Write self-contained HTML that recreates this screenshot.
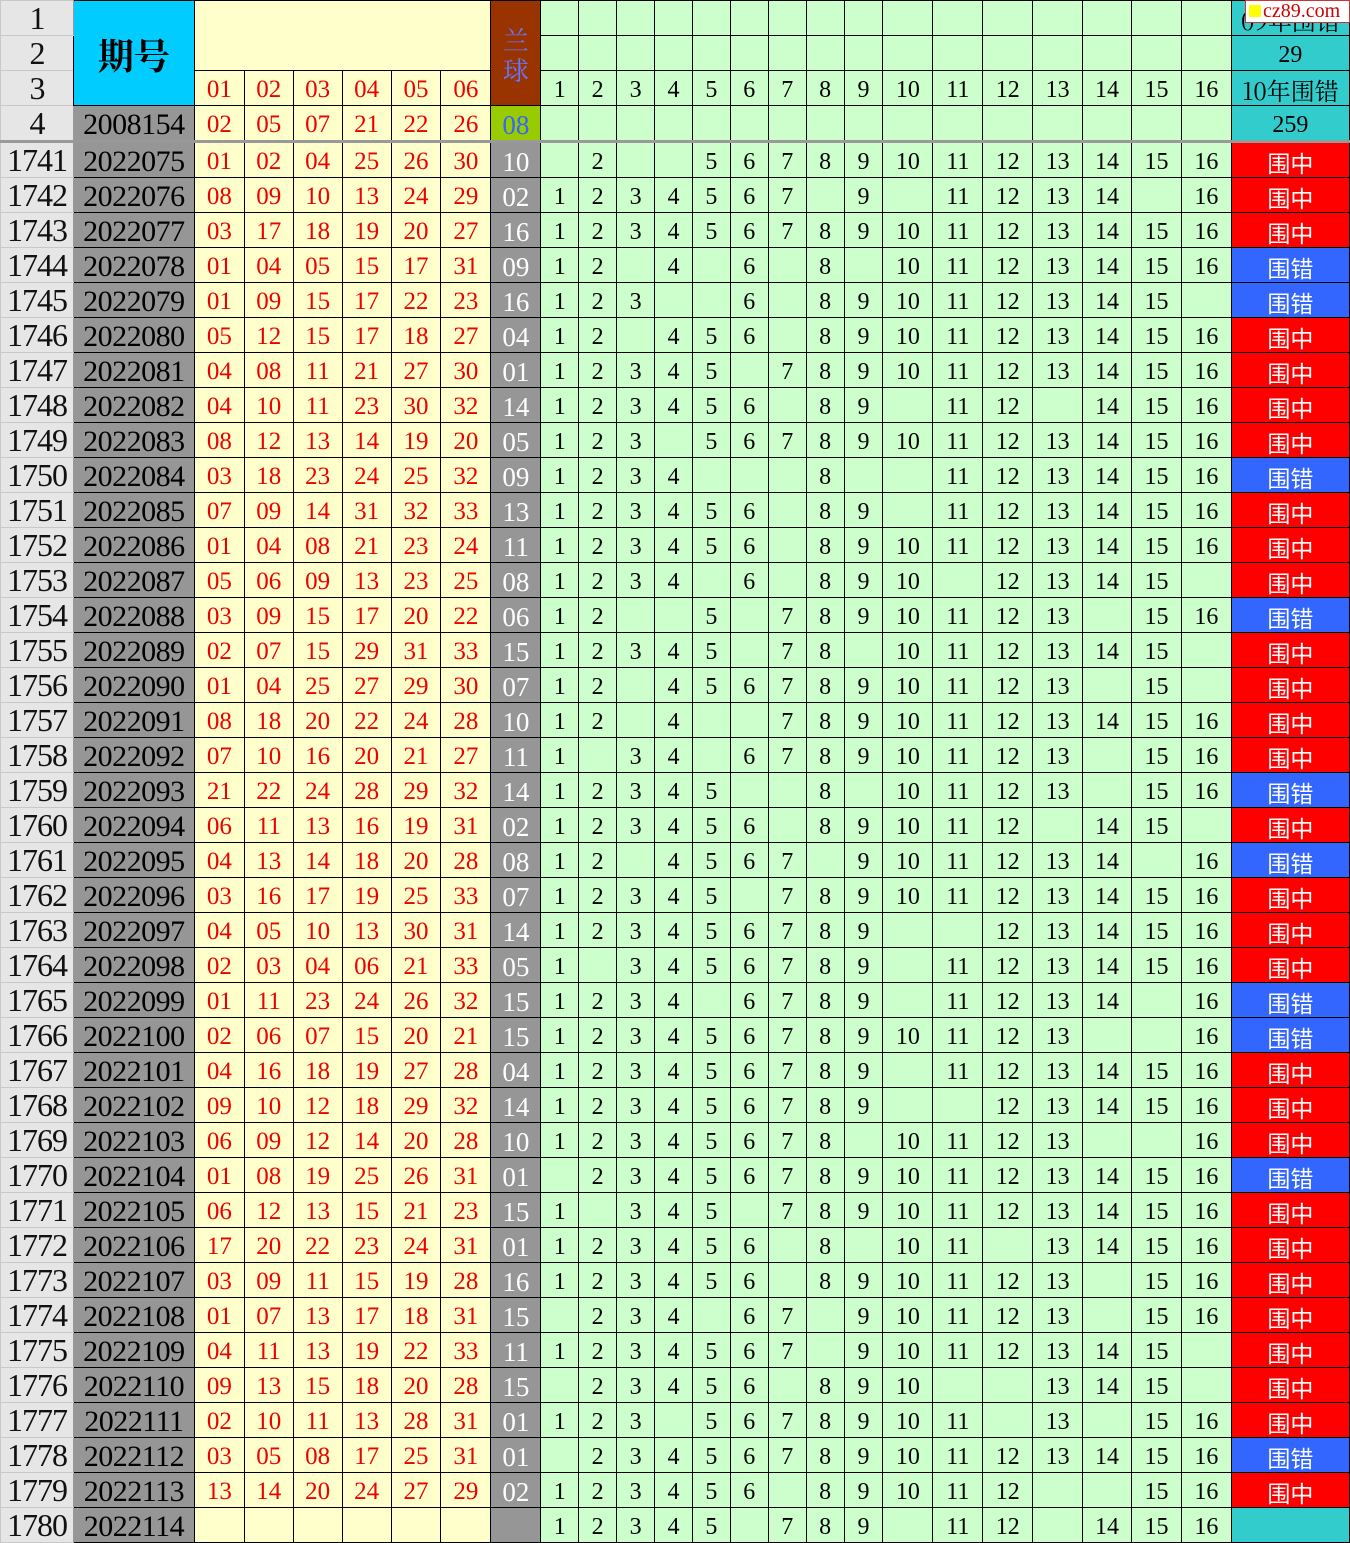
<!DOCTYPE html>
<html><head><meta charset="utf-8">
<style>
body{margin:0;width:1350px;height:1539px;overflow:hidden;background:#fff;position:relative}
table{border-collapse:collapse;table-layout:fixed;position:absolute;left:0;top:0;font-family:"Liberation Serif","Noto Serif CJK SC",serif}
td,th{height:30px;padding:4px 0 0 0;border:1px solid #000;text-align:center;font-size:24px;background:#ccffcc;color:#000;overflow:hidden;white-space:nowrap;line-height:30px}
th{background:#e6e6e6;border:1px solid #c8c8c8;border-right:1px solid #999;font-weight:normal;font-size:32px;color:#111;letter-spacing:-1px;padding-top:0;height:34px;line-height:32px}
td.q{background:#969696;font-size:30px;letter-spacing:-0.5px}
td.r{background:#ffffcc;color:#e00;font-size:25px}
td.b{background:#969696;color:#fff;font-size:27px}
td.z{background:#ff0000;color:#fff;font-family:"Noto Sans CJK SC",sans-serif;font-size:23px}
td.c{background:#3366ff;color:#fff;font-family:"Noto Sans CJK SC",sans-serif;font-size:23px}
td.t{background:#33cccc;font-size:24px}
td.y{background:#ffffcc}
tr.sep td,tr.sep th{border-top:3px solid #999}
.wm{position:absolute;right:0;top:0;width:103px;height:21px;background:#fff;border:1px solid #c33;font-family:"Liberation Serif",serif;font-size:20px;color:#c00;line-height:21px;white-space:nowrap;overflow:hidden}
.wm i{display:inline-block;width:12px;height:12px;background:#ff0;margin:0 2px 0 3px}
</style></head><body>
<table>
<colgroup><col style="width:73px"><col style="width:121px"><col style="width:50px"><col style="width:49px"><col style="width:49px"><col style="width:49px"><col style="width:50px"><col style="width:50px"><col style="width:50px"><col style="width:38px"><col style="width:38px"><col style="width:38px"><col style="width:38px"><col style="width:38px"><col style="width:38px"><col style="width:38px"><col style="width:38px"><col style="width:39px"><col style="width:50px"><col style="width:50px"><col style="width:50px"><col style="width:50px"><col style="width:49px"><col style="width:50px"><col style="width:50px"><col style="width:118px"></colgroup>
<tr><th>1</th><td rowspan="3" style="background:#00ccff;font-size:36px;font-family:'Noto Serif CJK SC',serif;font-weight:bold">期号</td><td class="y" colspan="6" rowspan="2"></td><td rowspan="3" style="background:#993300;color:#6677ff;font-size:26px;line-height:30px;white-space:normal;font-family:'Noto Serif CJK SC',serif">兰<br>球</td><td></td><td></td><td></td><td></td><td></td><td></td><td></td><td></td><td></td><td></td><td></td><td></td><td></td><td></td><td></td><td></td><td class="t" style="font-family:'Noto Serif CJK SC',serif;line-height:30px;vertical-align:top">09年围错</td></tr>
<tr><th>2</th><td></td><td></td><td></td><td></td><td></td><td></td><td></td><td></td><td></td><td></td><td></td><td></td><td></td><td></td><td></td><td></td><td class="t">29</td></tr>
<tr><th>3</th><td class="r">01</td><td class="r">02</td><td class="r">03</td><td class="r">04</td><td class="r">05</td><td class="r">06</td><td>1</td><td>2</td><td>3</td><td>4</td><td>5</td><td>6</td><td>7</td><td>8</td><td>9</td><td>10</td><td>11</td><td>12</td><td>13</td><td>14</td><td>15</td><td>16</td><td class="t" style="font-family:'Noto Serif CJK SC',serif">10年围错</td></tr>
<tr><th>4</th><td class="q">2008154</td><td class="r">02</td><td class="r">05</td><td class="r">07</td><td class="r">21</td><td class="r">22</td><td class="r">26</td><td style="background:#99cc00;color:#3366ff;font-size:27px">08</td><td></td><td></td><td></td><td></td><td></td><td></td><td></td><td></td><td></td><td></td><td></td><td></td><td></td><td></td><td></td><td></td><td class="t">259</td></tr>
<tr class="sep"><th>1741</th><td class="q">2022075</td><td class="r">01</td><td class="r">02</td><td class="r">04</td><td class="r">25</td><td class="r">26</td><td class="r">30</td><td class="b">10</td><td></td><td>2</td><td></td><td></td><td>5</td><td>6</td><td>7</td><td>8</td><td>9</td><td>10</td><td>11</td><td>12</td><td>13</td><td>14</td><td>15</td><td>16</td><td class="z">围中</td></tr>
<tr><th>1742</th><td class="q">2022076</td><td class="r">08</td><td class="r">09</td><td class="r">10</td><td class="r">13</td><td class="r">24</td><td class="r">29</td><td class="b">02</td><td>1</td><td>2</td><td>3</td><td>4</td><td>5</td><td>6</td><td>7</td><td></td><td>9</td><td></td><td>11</td><td>12</td><td>13</td><td>14</td><td></td><td>16</td><td class="z">围中</td></tr>
<tr><th>1743</th><td class="q">2022077</td><td class="r">03</td><td class="r">17</td><td class="r">18</td><td class="r">19</td><td class="r">20</td><td class="r">27</td><td class="b">16</td><td>1</td><td>2</td><td>3</td><td>4</td><td>5</td><td>6</td><td>7</td><td>8</td><td>9</td><td>10</td><td>11</td><td>12</td><td>13</td><td>14</td><td>15</td><td>16</td><td class="z">围中</td></tr>
<tr><th>1744</th><td class="q">2022078</td><td class="r">01</td><td class="r">04</td><td class="r">05</td><td class="r">15</td><td class="r">17</td><td class="r">31</td><td class="b">09</td><td>1</td><td>2</td><td></td><td>4</td><td></td><td>6</td><td></td><td>8</td><td></td><td>10</td><td>11</td><td>12</td><td>13</td><td>14</td><td>15</td><td>16</td><td class="c">围错</td></tr>
<tr><th>1745</th><td class="q">2022079</td><td class="r">01</td><td class="r">09</td><td class="r">15</td><td class="r">17</td><td class="r">22</td><td class="r">23</td><td class="b">16</td><td>1</td><td>2</td><td>3</td><td></td><td></td><td>6</td><td></td><td>8</td><td>9</td><td>10</td><td>11</td><td>12</td><td>13</td><td>14</td><td>15</td><td></td><td class="c">围错</td></tr>
<tr><th>1746</th><td class="q">2022080</td><td class="r">05</td><td class="r">12</td><td class="r">15</td><td class="r">17</td><td class="r">18</td><td class="r">27</td><td class="b">04</td><td>1</td><td>2</td><td></td><td>4</td><td>5</td><td>6</td><td></td><td>8</td><td>9</td><td>10</td><td>11</td><td>12</td><td>13</td><td>14</td><td>15</td><td>16</td><td class="z">围中</td></tr>
<tr><th>1747</th><td class="q">2022081</td><td class="r">04</td><td class="r">08</td><td class="r">11</td><td class="r">21</td><td class="r">27</td><td class="r">30</td><td class="b">01</td><td>1</td><td>2</td><td>3</td><td>4</td><td>5</td><td></td><td>7</td><td>8</td><td>9</td><td>10</td><td>11</td><td>12</td><td>13</td><td>14</td><td>15</td><td>16</td><td class="z">围中</td></tr>
<tr><th>1748</th><td class="q">2022082</td><td class="r">04</td><td class="r">10</td><td class="r">11</td><td class="r">23</td><td class="r">30</td><td class="r">32</td><td class="b">14</td><td>1</td><td>2</td><td>3</td><td>4</td><td>5</td><td>6</td><td></td><td>8</td><td>9</td><td></td><td>11</td><td>12</td><td></td><td>14</td><td>15</td><td>16</td><td class="z">围中</td></tr>
<tr><th>1749</th><td class="q">2022083</td><td class="r">08</td><td class="r">12</td><td class="r">13</td><td class="r">14</td><td class="r">19</td><td class="r">20</td><td class="b">05</td><td>1</td><td>2</td><td>3</td><td></td><td>5</td><td>6</td><td>7</td><td>8</td><td>9</td><td>10</td><td>11</td><td>12</td><td>13</td><td>14</td><td>15</td><td>16</td><td class="z">围中</td></tr>
<tr><th>1750</th><td class="q">2022084</td><td class="r">03</td><td class="r">18</td><td class="r">23</td><td class="r">24</td><td class="r">25</td><td class="r">32</td><td class="b">09</td><td>1</td><td>2</td><td>3</td><td>4</td><td></td><td></td><td></td><td>8</td><td></td><td></td><td>11</td><td>12</td><td>13</td><td>14</td><td>15</td><td>16</td><td class="c">围错</td></tr>
<tr><th>1751</th><td class="q">2022085</td><td class="r">07</td><td class="r">09</td><td class="r">14</td><td class="r">31</td><td class="r">32</td><td class="r">33</td><td class="b">13</td><td>1</td><td>2</td><td>3</td><td>4</td><td>5</td><td>6</td><td></td><td>8</td><td>9</td><td></td><td>11</td><td>12</td><td>13</td><td>14</td><td>15</td><td>16</td><td class="z">围中</td></tr>
<tr><th>1752</th><td class="q">2022086</td><td class="r">01</td><td class="r">04</td><td class="r">08</td><td class="r">21</td><td class="r">23</td><td class="r">24</td><td class="b">11</td><td>1</td><td>2</td><td>3</td><td>4</td><td>5</td><td>6</td><td></td><td>8</td><td>9</td><td>10</td><td>11</td><td>12</td><td>13</td><td>14</td><td>15</td><td>16</td><td class="z">围中</td></tr>
<tr><th>1753</th><td class="q">2022087</td><td class="r">05</td><td class="r">06</td><td class="r">09</td><td class="r">13</td><td class="r">23</td><td class="r">25</td><td class="b">08</td><td>1</td><td>2</td><td>3</td><td>4</td><td></td><td>6</td><td></td><td>8</td><td>9</td><td>10</td><td></td><td>12</td><td>13</td><td>14</td><td>15</td><td></td><td class="z">围中</td></tr>
<tr><th>1754</th><td class="q">2022088</td><td class="r">03</td><td class="r">09</td><td class="r">15</td><td class="r">17</td><td class="r">20</td><td class="r">22</td><td class="b">06</td><td>1</td><td>2</td><td></td><td></td><td>5</td><td></td><td>7</td><td>8</td><td>9</td><td>10</td><td>11</td><td>12</td><td>13</td><td></td><td>15</td><td>16</td><td class="c">围错</td></tr>
<tr><th>1755</th><td class="q">2022089</td><td class="r">02</td><td class="r">07</td><td class="r">15</td><td class="r">29</td><td class="r">31</td><td class="r">33</td><td class="b">15</td><td>1</td><td>2</td><td>3</td><td>4</td><td>5</td><td></td><td>7</td><td>8</td><td></td><td>10</td><td>11</td><td>12</td><td>13</td><td>14</td><td>15</td><td></td><td class="z">围中</td></tr>
<tr><th>1756</th><td class="q">2022090</td><td class="r">01</td><td class="r">04</td><td class="r">25</td><td class="r">27</td><td class="r">29</td><td class="r">30</td><td class="b">07</td><td>1</td><td>2</td><td></td><td>4</td><td>5</td><td>6</td><td>7</td><td>8</td><td>9</td><td>10</td><td>11</td><td>12</td><td>13</td><td></td><td>15</td><td></td><td class="z">围中</td></tr>
<tr><th>1757</th><td class="q">2022091</td><td class="r">08</td><td class="r">18</td><td class="r">20</td><td class="r">22</td><td class="r">24</td><td class="r">28</td><td class="b">10</td><td>1</td><td>2</td><td></td><td>4</td><td></td><td></td><td>7</td><td>8</td><td>9</td><td>10</td><td>11</td><td>12</td><td>13</td><td>14</td><td>15</td><td>16</td><td class="z">围中</td></tr>
<tr><th>1758</th><td class="q">2022092</td><td class="r">07</td><td class="r">10</td><td class="r">16</td><td class="r">20</td><td class="r">21</td><td class="r">27</td><td class="b">11</td><td>1</td><td></td><td>3</td><td>4</td><td></td><td>6</td><td>7</td><td>8</td><td>9</td><td>10</td><td>11</td><td>12</td><td>13</td><td></td><td>15</td><td>16</td><td class="z">围中</td></tr>
<tr><th>1759</th><td class="q">2022093</td><td class="r">21</td><td class="r">22</td><td class="r">24</td><td class="r">28</td><td class="r">29</td><td class="r">32</td><td class="b">14</td><td>1</td><td>2</td><td>3</td><td>4</td><td>5</td><td></td><td></td><td>8</td><td></td><td>10</td><td>11</td><td>12</td><td>13</td><td></td><td>15</td><td>16</td><td class="c">围错</td></tr>
<tr><th>1760</th><td class="q">2022094</td><td class="r">06</td><td class="r">11</td><td class="r">13</td><td class="r">16</td><td class="r">19</td><td class="r">31</td><td class="b">02</td><td>1</td><td>2</td><td>3</td><td>4</td><td>5</td><td>6</td><td></td><td>8</td><td>9</td><td>10</td><td>11</td><td>12</td><td></td><td>14</td><td>15</td><td></td><td class="z">围中</td></tr>
<tr><th>1761</th><td class="q">2022095</td><td class="r">04</td><td class="r">13</td><td class="r">14</td><td class="r">18</td><td class="r">20</td><td class="r">28</td><td class="b">08</td><td>1</td><td>2</td><td></td><td>4</td><td>5</td><td>6</td><td>7</td><td></td><td>9</td><td>10</td><td>11</td><td>12</td><td>13</td><td>14</td><td></td><td>16</td><td class="c">围错</td></tr>
<tr><th>1762</th><td class="q">2022096</td><td class="r">03</td><td class="r">16</td><td class="r">17</td><td class="r">19</td><td class="r">25</td><td class="r">33</td><td class="b">07</td><td>1</td><td>2</td><td>3</td><td>4</td><td>5</td><td></td><td>7</td><td>8</td><td>9</td><td>10</td><td>11</td><td>12</td><td>13</td><td>14</td><td>15</td><td>16</td><td class="z">围中</td></tr>
<tr><th>1763</th><td class="q">2022097</td><td class="r">04</td><td class="r">05</td><td class="r">10</td><td class="r">13</td><td class="r">30</td><td class="r">31</td><td class="b">14</td><td>1</td><td>2</td><td>3</td><td>4</td><td>5</td><td>6</td><td>7</td><td>8</td><td>9</td><td></td><td></td><td>12</td><td>13</td><td>14</td><td>15</td><td>16</td><td class="z">围中</td></tr>
<tr><th>1764</th><td class="q">2022098</td><td class="r">02</td><td class="r">03</td><td class="r">04</td><td class="r">06</td><td class="r">21</td><td class="r">33</td><td class="b">05</td><td>1</td><td></td><td>3</td><td>4</td><td>5</td><td>6</td><td>7</td><td>8</td><td>9</td><td></td><td>11</td><td>12</td><td>13</td><td>14</td><td>15</td><td>16</td><td class="z">围中</td></tr>
<tr><th>1765</th><td class="q">2022099</td><td class="r">01</td><td class="r">11</td><td class="r">23</td><td class="r">24</td><td class="r">26</td><td class="r">32</td><td class="b">15</td><td>1</td><td>2</td><td>3</td><td>4</td><td></td><td>6</td><td>7</td><td>8</td><td>9</td><td></td><td>11</td><td>12</td><td>13</td><td>14</td><td></td><td>16</td><td class="c">围错</td></tr>
<tr><th>1766</th><td class="q">2022100</td><td class="r">02</td><td class="r">06</td><td class="r">07</td><td class="r">15</td><td class="r">20</td><td class="r">21</td><td class="b">15</td><td>1</td><td>2</td><td>3</td><td>4</td><td>5</td><td>6</td><td>7</td><td>8</td><td>9</td><td>10</td><td>11</td><td>12</td><td>13</td><td></td><td></td><td>16</td><td class="c">围错</td></tr>
<tr><th>1767</th><td class="q">2022101</td><td class="r">04</td><td class="r">16</td><td class="r">18</td><td class="r">19</td><td class="r">27</td><td class="r">28</td><td class="b">04</td><td>1</td><td>2</td><td>3</td><td>4</td><td>5</td><td>6</td><td>7</td><td>8</td><td>9</td><td></td><td>11</td><td>12</td><td>13</td><td>14</td><td>15</td><td>16</td><td class="z">围中</td></tr>
<tr><th>1768</th><td class="q">2022102</td><td class="r">09</td><td class="r">10</td><td class="r">12</td><td class="r">18</td><td class="r">29</td><td class="r">32</td><td class="b">14</td><td>1</td><td>2</td><td>3</td><td>4</td><td>5</td><td>6</td><td>7</td><td>8</td><td>9</td><td></td><td></td><td>12</td><td>13</td><td>14</td><td>15</td><td>16</td><td class="z">围中</td></tr>
<tr><th>1769</th><td class="q">2022103</td><td class="r">06</td><td class="r">09</td><td class="r">12</td><td class="r">14</td><td class="r">20</td><td class="r">28</td><td class="b">10</td><td>1</td><td>2</td><td>3</td><td>4</td><td>5</td><td>6</td><td>7</td><td>8</td><td></td><td>10</td><td>11</td><td>12</td><td>13</td><td></td><td></td><td>16</td><td class="z">围中</td></tr>
<tr><th>1770</th><td class="q">2022104</td><td class="r">01</td><td class="r">08</td><td class="r">19</td><td class="r">25</td><td class="r">26</td><td class="r">31</td><td class="b">01</td><td></td><td>2</td><td>3</td><td>4</td><td>5</td><td>6</td><td>7</td><td>8</td><td>9</td><td>10</td><td>11</td><td>12</td><td>13</td><td>14</td><td>15</td><td>16</td><td class="c">围错</td></tr>
<tr><th>1771</th><td class="q">2022105</td><td class="r">06</td><td class="r">12</td><td class="r">13</td><td class="r">15</td><td class="r">21</td><td class="r">23</td><td class="b">15</td><td>1</td><td></td><td>3</td><td>4</td><td>5</td><td></td><td>7</td><td>8</td><td>9</td><td>10</td><td>11</td><td>12</td><td>13</td><td>14</td><td>15</td><td>16</td><td class="z">围中</td></tr>
<tr><th>1772</th><td class="q">2022106</td><td class="r">17</td><td class="r">20</td><td class="r">22</td><td class="r">23</td><td class="r">24</td><td class="r">31</td><td class="b">01</td><td>1</td><td>2</td><td>3</td><td>4</td><td>5</td><td>6</td><td></td><td>8</td><td></td><td>10</td><td>11</td><td></td><td>13</td><td>14</td><td>15</td><td>16</td><td class="z">围中</td></tr>
<tr><th>1773</th><td class="q">2022107</td><td class="r">03</td><td class="r">09</td><td class="r">11</td><td class="r">15</td><td class="r">19</td><td class="r">28</td><td class="b">16</td><td>1</td><td>2</td><td>3</td><td>4</td><td>5</td><td>6</td><td></td><td>8</td><td>9</td><td>10</td><td>11</td><td>12</td><td>13</td><td></td><td>15</td><td>16</td><td class="z">围中</td></tr>
<tr><th>1774</th><td class="q">2022108</td><td class="r">01</td><td class="r">07</td><td class="r">13</td><td class="r">17</td><td class="r">18</td><td class="r">31</td><td class="b">15</td><td></td><td>2</td><td>3</td><td>4</td><td></td><td>6</td><td>7</td><td></td><td>9</td><td>10</td><td>11</td><td>12</td><td>13</td><td></td><td>15</td><td>16</td><td class="z">围中</td></tr>
<tr><th>1775</th><td class="q">2022109</td><td class="r">04</td><td class="r">11</td><td class="r">13</td><td class="r">19</td><td class="r">22</td><td class="r">33</td><td class="b">11</td><td>1</td><td>2</td><td>3</td><td>4</td><td>5</td><td>6</td><td>7</td><td></td><td>9</td><td>10</td><td>11</td><td>12</td><td>13</td><td>14</td><td>15</td><td></td><td class="z">围中</td></tr>
<tr><th>1776</th><td class="q">2022110</td><td class="r">09</td><td class="r">13</td><td class="r">15</td><td class="r">18</td><td class="r">20</td><td class="r">28</td><td class="b">15</td><td></td><td>2</td><td>3</td><td>4</td><td>5</td><td>6</td><td></td><td>8</td><td>9</td><td>10</td><td></td><td></td><td>13</td><td>14</td><td>15</td><td></td><td class="z">围中</td></tr>
<tr><th>1777</th><td class="q">2022111</td><td class="r">02</td><td class="r">10</td><td class="r">11</td><td class="r">13</td><td class="r">28</td><td class="r">31</td><td class="b">01</td><td>1</td><td>2</td><td>3</td><td></td><td>5</td><td>6</td><td>7</td><td>8</td><td>9</td><td>10</td><td>11</td><td></td><td>13</td><td></td><td>15</td><td>16</td><td class="z">围中</td></tr>
<tr><th>1778</th><td class="q">2022112</td><td class="r">03</td><td class="r">05</td><td class="r">08</td><td class="r">17</td><td class="r">25</td><td class="r">31</td><td class="b">01</td><td></td><td>2</td><td>3</td><td>4</td><td>5</td><td>6</td><td>7</td><td>8</td><td>9</td><td>10</td><td>11</td><td>12</td><td>13</td><td>14</td><td>15</td><td>16</td><td class="c">围错</td></tr>
<tr><th>1779</th><td class="q">2022113</td><td class="r">13</td><td class="r">14</td><td class="r">20</td><td class="r">24</td><td class="r">27</td><td class="r">29</td><td class="b">02</td><td>1</td><td>2</td><td>3</td><td>4</td><td>5</td><td>6</td><td></td><td>8</td><td>9</td><td>10</td><td>11</td><td>12</td><td></td><td></td><td>15</td><td>16</td><td class="z">围中</td></tr>
<tr><th>1780</th><td class="q">2022114</td><td class="r"></td><td class="r"></td><td class="r"></td><td class="r"></td><td class="r"></td><td class="r"></td><td class="b"></td><td>1</td><td>2</td><td>3</td><td>4</td><td>5</td><td></td><td>7</td><td>8</td><td>9</td><td></td><td>11</td><td>12</td><td></td><td>14</td><td>15</td><td>16</td><td class="t"></td></tr>
</table>
<div class="wm"><i></i>cz89.com</div>
</body></html>
